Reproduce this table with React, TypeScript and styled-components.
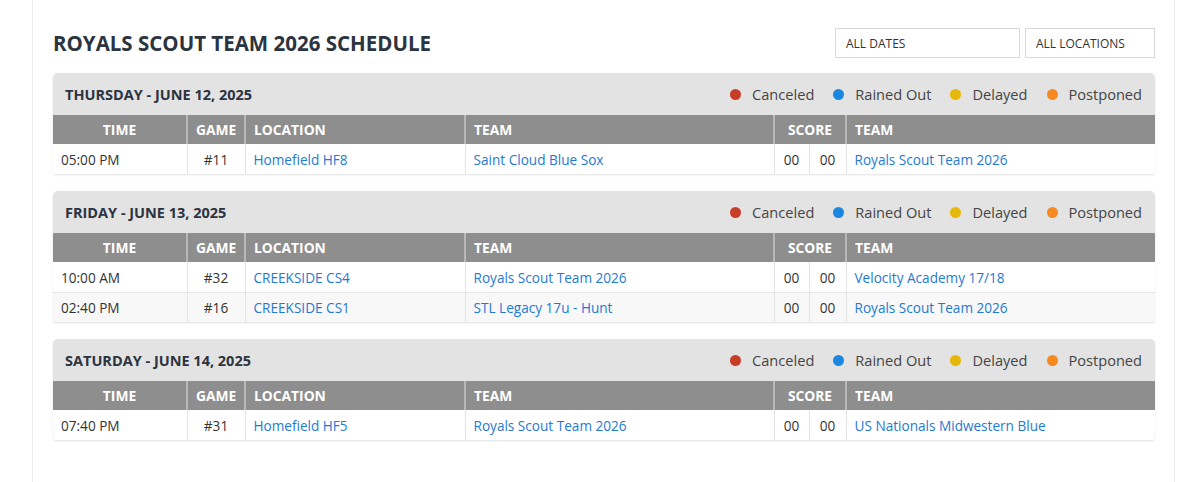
import React from "react";
import styled, { createGlobalStyle } from "styled-components";

const Global = createGlobalStyle`
  html, body { margin: 0; padding: 0; background: #ffffff; }
  body { font-family: "Open Sans", "Liberation Sans", sans-serif; }
`;

const Page = styled.div`
  height: 482px;
  overflow: hidden;
`;

const Card = styled.div`
  margin-left: 32px;
  width: 1102px;
  min-height: 482px;
  box-sizing: content-box;
  padding: 28px 19px 0 20px;
  border-left: 1px solid #ececec;
  border-right: 1px solid #ececec;
`;

const TopBar = styled.div`
  display: flex;
  align-items: center;
  justify-content: space-between;
  height: 30px;
  margin-bottom: 15px;
`;

const Title = styled.h1`
  margin: 0;
  font-size: 20.5px;
  font-weight: 700;
  color: #2b3440;
  text-transform: uppercase;
`;

const Filters = styled.div`
  display: flex;
  gap: 5px;
`;

const Filter = styled.div<{ $w: number }>`
  width: ${(p) => p.$w}px;
  height: 30px;
  box-sizing: border-box;
  border: 1px solid #d9d9d9;
  display: flex;
  align-items: center;
  padding-left: 10px;
  font-size: 12px;
  color: #333;
`;

const Section = styled.section`
  border-radius: 5px 5px 3px 3px;
  overflow: hidden;
  box-shadow: 0 1px 2px rgba(0, 0, 0, 0.12);
  margin-bottom: 17px;
`;

const DayHeader = styled.div`
  height: 42px;
  background: #e3e3e3;
  display: flex;
  align-items: center;
  justify-content: space-between;
  padding: 0 13px 0 12px;
`;

const DayTitle = styled.h2`
  margin: 0;
  font-size: 14.5px;
  font-weight: 700;
  color: #2b3440;
`;

const Legend = styled.div`
  display: flex;
  align-items: center;
  gap: 19px;
`;

const LegendItem = styled.div`
  display: flex;
  align-items: center;
  gap: 11px;
  font-size: 14.6px;
  color: #454545;
`;

const Dot = styled.span<{ $c: string }>`
  width: 11px;
  height: 11px;
  border-radius: 50%;
  background: ${(p) => p.$c};
`;

const Table = styled.table`
  width: 100%;
  border-collapse: collapse;
  table-layout: fixed;
`;

const Th = styled.th<{ $align?: string }>`
  height: 29px;
  padding: 0 8px;
  background: #8e8e8e;
  color: #ffffff;
  font-size: 13.8px;
  font-weight: 700;
  text-align: ${(p) => p.$align || "left"};
  border-left: 2px solid #b8b8b8;
  &:first-child { border-left: none; }
`;

const Tr = styled.tr`
  background: #ffffff;
  &:nth-child(even) { background: #f8f8f8; }
  & + & td { border-top: 1px solid #e6e6e6; height: 29px; }
`;

const Td = styled.td<{ $align?: string }>`
  height: 30px;
  padding: 0 8px;
  font-size: 13.6px;
  color: #333;
  text-align: ${(p) => p.$align || "left"};
  border-left: 1px solid #e4e4e4;
  white-space: nowrap;
  &:first-child { border-left: none; }
`;

const Link = styled.a`
  color: #1f7ad2;
  text-decoration: none;
`;

const legend = [
  { label: "Canceled", color: "#c63d2a" },
  { label: "Rained Out", color: "#1a88e0" },
  { label: "Delayed", color: "#e5b80b" },
  { label: "Postponed", color: "#f78a1f" },
];

type Game = { time: string; num: string; loc: string; home: string; away: string };
const days: { title: string; games: Game[] }[] = [
  {
    title: "THURSDAY - JUNE 12, 2025",
    games: [{ time: "05:00 PM", num: "#11", loc: "Homefield HF8", home: "Saint Cloud Blue Sox", away: "Royals Scout Team 2026" }],
  },
  {
    title: "FRIDAY - JUNE 13, 2025",
    games: [
      { time: "10:00 AM", num: "#32", loc: "CREEKSIDE CS4", home: "Royals Scout Team 2026", away: "Velocity Academy 17/18" },
      { time: "02:40 PM", num: "#16", loc: "CREEKSIDE CS1", home: "STL Legacy 17u - Hunt", away: "Royals Scout Team 2026" },
    ],
  },
  {
    title: "SATURDAY - JUNE 14, 2025",
    games: [{ time: "07:40 PM", num: "#31", loc: "Homefield HF5", home: "Royals Scout Team 2026", away: "US Nationals Midwestern Blue" }],
  },
];

export default function App() {
  return (
    <Page>
      <Global />
      <Card>
        <TopBar>
          <Title>Royals Scout Team 2026 Schedule</Title>
          <Filters>
            <Filter $w={185}>ALL DATES</Filter>
            <Filter $w={130}>ALL LOCATIONS</Filter>
          </Filters>
        </TopBar>
        {days.map((d) => (
          <Section key={d.title}>
            <DayHeader>
              <DayTitle>{d.title}</DayTitle>
              <Legend>
                {legend.map((l) => (
                  <LegendItem key={l.label}>
                    <Dot $c={l.color} />
                    {l.label}
                  </LegendItem>
                ))}
              </Legend>
            </DayHeader>
            <Table>
              <colgroup>
                <col style={{ width: 134 }} />
                <col style={{ width: 58 }} />
                <col style={{ width: 220 }} />
                <col style={{ width: 309 }} />
                <col style={{ width: 35 }} />
                <col style={{ width: 37 }} />
                <col />
              </colgroup>
              <thead>
                <tr>
                  <Th $align="center">TIME</Th>
                  <Th $align="center">GAME</Th>
                  <Th>LOCATION</Th>
                  <Th>TEAM</Th>
                  <Th $align="center" colSpan={2}>SCORE</Th>
                  <Th>TEAM</Th>
                </tr>
              </thead>
              <tbody>
                {d.games.map((g) => (
                  <Tr key={g.num}>
                    <Td>{g.time}</Td>
                    <Td $align="center">{g.num}</Td>
                    <Td><Link>{g.loc}</Link></Td>
                    <Td><Link>{g.home}</Link></Td>
                    <Td $align="center">00</Td>
                    <Td $align="center">00</Td>
                    <Td><Link>{g.away}</Link></Td>
                  </Tr>
                ))}
              </tbody>
            </Table>
          </Section>
        ))}
      </Card>
    </Page>
  );
}
